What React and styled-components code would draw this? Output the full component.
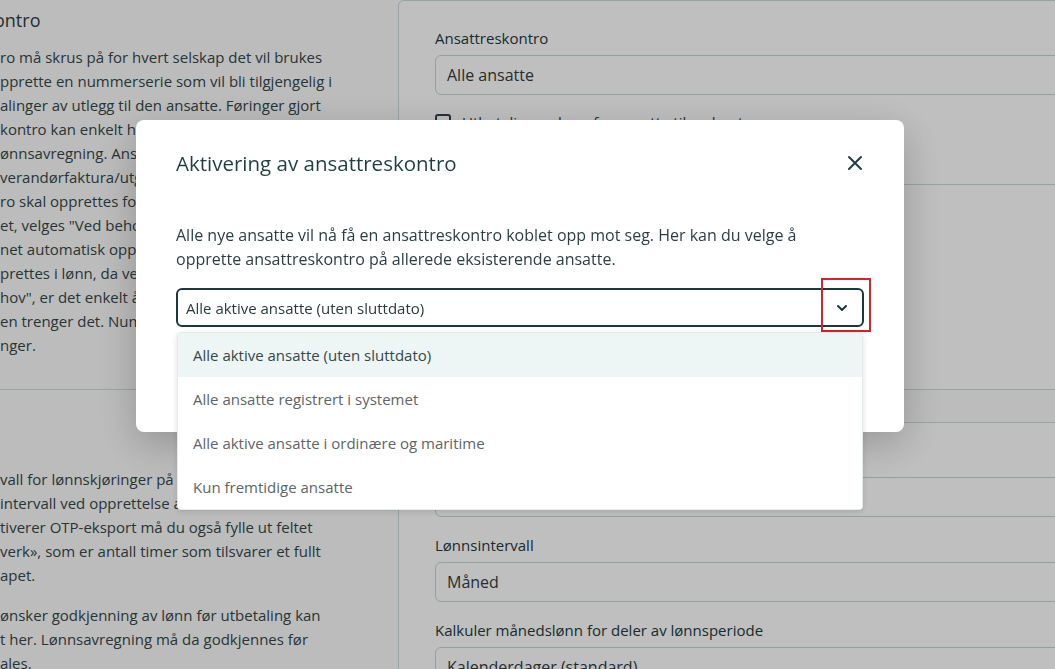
import React from 'react';
import styled, { createGlobalStyle } from 'styled-components';

const GlobalStyle = createGlobalStyle`
  html, body {
    margin: 0;
    padding: 0;
  }
  body {
    font-family: "Open Sans", "Noto Sans", sans-serif;
    background: #fbfbfb;
    color: #3b4b4e;
    overflow: hidden;
  }
`;

const Page = styled.div`
  width: 1120px;
  height: 669px;
  overflow: hidden;
`;

const Section = styled.section`
  display: grid;
  grid-template-columns: 398px 1fr;
  padding-top: ${p => p.$top || 0}px;
  min-height: ${p => p.$height || 0}px;
  border-bottom: ${p => (p.$divided ? '1px solid #cbdadd' : 'none')};
`;

const TextCol = styled.div`
  padding-top: ${p => p.$pad || 0}px;
  overflow: hidden;
`;

const Heading = styled.h2`
  margin: 0 0 12px -6px;
  font-size: 18px;
  font-weight: 500;
  line-height: 26px;
  color: #2f3e41;
  white-space: nowrap;
`;

const Para = styled.p`
  margin: 0 0 ${p => p.$gap || 16}px;
  font-size: 15px;
  line-height: 24px;
  color: #36474a;
`;

const Line = styled.span`
  display: block;
  white-space: nowrap;
`;

const Card = styled.div`
  background: #ffffff;
  border: 1px solid #cbdadd;
  border-bottom: ${p => (p.$open ? 'none' : '1px solid #cbdadd')};
  border-radius: 6px 0 0 ${p => (p.$open ? '0' : '6px')};
`;

const CardBody = styled.div`
  padding: 26px 36px 0;
  height: ${p => p.$height || 'auto'};
  box-sizing: border-box;
`;

const CardRule = styled.div`
  border-top: 1px solid #cbdadd;
`;

const Field = styled.div`
  display: flex;
  flex-direction: column;
  gap: 6px;
  margin-bottom: 17px;
`;

const Label = styled.label`
  font-size: 15px;
  line-height: 22px;
  color: #233a3e;
`;

const Input = styled.div`
  height: 40px;
  box-sizing: border-box;
  border: 1px solid #c6d5d8;
  border-radius: 6px;
  padding: 0 11px;
  display: flex;
  align-items: center;
  font-size: 16px;
  color: #333d3f;
`;

const CheckRow = styled.div`
  display: flex;
  align-items: center;
  gap: 11px;
  margin-top: 1px;
  font-size: 15px;
  color: #2f3e41;
`;

const Box = styled.span`
  width: 16px;
  height: 16px;
  box-sizing: border-box;
  border: 2px solid #2f4649;
  border-radius: 3px;
`;

const Backdrop = styled.div`
  position: fixed;
  inset: 0;
  background: rgba(0, 0, 0, 0.25);
`;

const Modal = styled.div`
  position: fixed;
  top: 120px;
  left: 136px;
  width: 768px;
  height: 312px;
  background: #ffffff;
  border-radius: 8px;
  box-shadow: 0 12px 40px rgba(0, 0, 0, 0.22);
  box-sizing: border-box;
`;

const ModalHeader = styled.div`
  display: flex;
  align-items: center;
  justify-content: space-between;
  padding: 29px 37px 0 40px;
`;

const Title = styled.h2`
  margin: 0;
  font-size: 20.5px;
  font-weight: 500;
  line-height: 28px;
  color: #1f3f43;
`;

const CloseButton = styled.button`
  width: 24px;
  height: 24px;
  padding: 0;
  border: none;
  background: none;
  display: flex;
  align-items: center;
  justify-content: center;
  color: #1f3f43;
`;

const ModalBody = styled.div`
  padding: 46px 40px 0;
`;

const Intro = styled.p`
  margin: 0 0 17px;
  font-size: 16px;
  line-height: 24px;
  color: #2d3f42;
`;

const SelectWrap = styled.div`
  position: relative;
`;

const Select = styled.div`
  height: 39px;
  box-sizing: border-box;
  border: 2px solid #1c3a3e;
  border-radius: 6px;
  padding: 0 14px 0 8px;
  display: flex;
  align-items: center;
  justify-content: space-between;
  font-size: 15px;
  color: #2a3a3d;
`;

const Highlight = styled.span`
  position: absolute;
  top: -10px;
  right: -7px;
  width: 50px;
  height: 54px;
  box-sizing: border-box;
  border: 2px solid #d6232a;
  pointer-events: none;
`;

const Menu = styled.ul`
  position: absolute;
  top: calc(100% + 5px);
  left: 1px;
  right: 1px;
  margin: 0;
  padding: 0;
  list-style: none;
  background: #ffffff;
  border: 1px solid #e4e9ea;
  border-radius: 4px;
  box-shadow: 0 2px 6px rgba(0, 0, 0, 0.12);
  overflow: hidden;
  z-index: 2;
`;

const Option = styled.li`
  height: 44px;
  display: flex;
  align-items: center;
  padding-left: 15px;
  font-size: 15px;
  color: ${p => (p.$active ? '#34484b' : '#5d6568')};
  background: ${p => (p.$active ? '#edf5f5' : '#ffffff')};
`;

const Chevron = () => (
  <svg width="12" height="8" viewBox="0 0 12 8" fill="none">
    <path d="M2 2l4 4 4-4" stroke="#1c3a3e" strokeWidth="2" strokeLinecap="round" strokeLinejoin="round" />
  </svg>
);

const CloseIcon = () => (
  <svg width="16" height="16" viewBox="0 0 16 16" fill="none">
    <path d="M2 2l12 12M14 2L2 14" stroke="currentColor" strokeWidth="2" strokeLinecap="round" />
  </svg>
);

const introLines = [
  'ro må skrus på for hvert selskap det vil brukes',
  'pprette en nummerserie som vil bli tilgjengelig i',
  'alinger av utlegg til den ansatte. Føringer gjort',
  'kontro kan enkelt hentes inn i',
  'ønnsavregning. Ansatte som har',
  'verandørfaktura/utgift',
  'ro skal opprettes for alle',
  'et, velges "Ved behov"',
  'net automatisk opprettet',
  'prettes i lønn, da velges',
  'hov", er det enkelt å',
  'en trenger det. Nummer',
  'nger.',
];

const payLines = [
  'vall for lønnskjøringer på',
  'intervall ved opprettelse av',
  'tiverer OTP-eksport må du også fylle ut feltet',
  'verk», som er antall timer som tilsvarer et fullt',
  'apet.',
];

const approveLines = [
  'ønsker godkjenning av lønn før utbetaling kan',
  't her. Lønnsavregning må da godkjennes før',
  'ales.',
];

const options = [
  'Alle aktive ansatte (uten sluttdato)',
  'Alle ansatte registrert i systemet',
  'Alle aktive ansatte i ordinære og maritime',
  'Kun fremtidige ansatte',
];

const Lines = ({ items }) => items.map(t => <Line key={t}>{t}</Line>);

export default function App() {
  return (
    <>
      <GlobalStyle />
      <Page>
        <Section $divided $height={389}>
          <TextCol $pad={7}>
            <Heading>ontro</Heading>
            <Para>
              <Lines items={introLines} />
            </Para>
          </TextCol>
          <Card $open>
            <CardBody $height="183px">
              <Field>
                <Label>Ansattreskontro</Label>
                <Input>Alle ansatte</Input>
              </Field>
              <CheckRow>
                <Box />
                Utbetaling av lønn for ansatte til reskontro
              </CheckRow>
            </CardBody>
            <CardRule />
          </Card>
        </Section>
        <Section $top={32}>
          <TextCol $pad={45}>
            <Para>
              <Lines items={payLines} />
            </Para>
            <Para>
              <Lines items={approveLines} />
            </Para>
          </TextCol>
          <Card>
            <CardBody>
              <Field>
                <Label>Timer i et årsverk</Label>
                <Input>1950</Input>
              </Field>
              <Field>
                <Label>Lønnsintervall</Label>
                <Input>Måned</Input>
              </Field>
              <Field>
                <Label>Kalkuler månedslønn for deler av lønnsperiode</Label>
                <Input>Kalenderdager (standard)</Input>
              </Field>
            </CardBody>
          </Card>
        </Section>
      </Page>
      <Backdrop />
      <Modal>
        <ModalHeader>
          <Title>Aktivering av ansattreskontro</Title>
          <CloseButton aria-label="Lukk">
            <CloseIcon />
          </CloseButton>
        </ModalHeader>
        <ModalBody>
          <Intro>
            Alle nye ansatte vil nå få en ansattreskontro koblet opp mot seg. Her kan du velge å
            opprette ansattreskontro på allerede eksisterende ansatte.
          </Intro>
          <SelectWrap>
            <Select>
              Alle aktive ansatte (uten sluttdato)
              <Chevron />
            </Select>
            <Highlight />
            <Menu>
              {options.map((o, i) => (
                <Option key={o} $active={i === 0}>
                  {o}
                </Option>
              ))}
            </Menu>
          </SelectWrap>
        </ModalBody>
      </Modal>
    </>
  );
}
